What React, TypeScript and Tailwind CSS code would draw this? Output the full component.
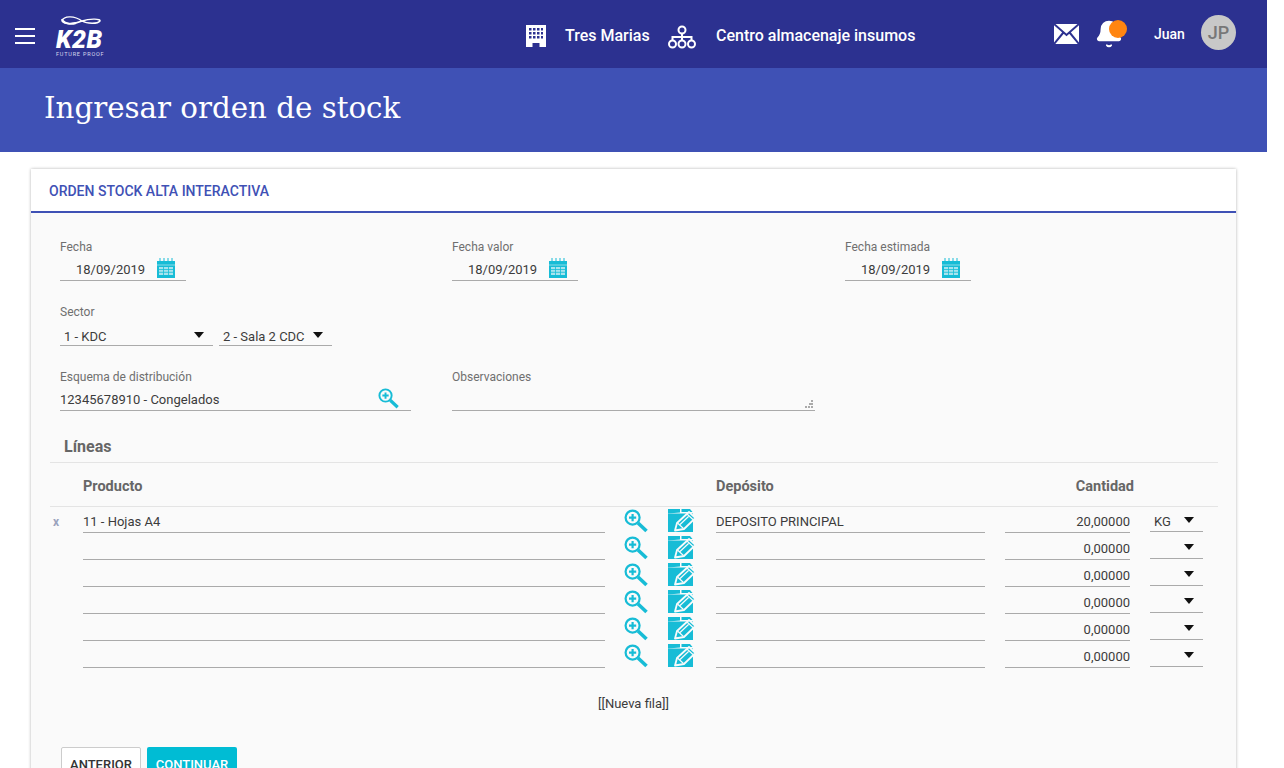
import { Bell } from "lucide-react";

const rows = [
  { product: "11 - Hojas A4", deposit: "DEPOSITO PRINCIPAL", qty: "20,00000", unit: "KG", remove: true },
  { product: "", deposit: "", qty: "0,00000", unit: "", remove: false },
  { product: "", deposit: "", qty: "0,00000", unit: "", remove: false },
  { product: "", deposit: "", qty: "0,00000", unit: "", remove: false },
  { product: "", deposit: "", qty: "0,00000", unit: "", remove: false },
  { product: "", deposit: "", qty: "0,00000", unit: "", remove: false },
];

function Arrow() {
  return (
    <svg width="10" height="6" viewBox="0 0 10 6" className="shrink-0">
      <polygon points="0,0 10,0 5,6" fill="#111" />
    </svg>
  );
}

function SearchIcon({ size = 24 }: { size?: number }) {
  return (
    <svg width={size} height={size} viewBox="0 0 24 24" fill="none" className="shrink-0">
      <circle cx="8.600" cy="8.600" r="7" stroke="#17bcd6" strokeWidth="2.200" />
      <path d="M5 8.600h7.200M8.600 5v7.200" stroke="#17bcd6" strokeWidth="2.200" />
      <path d="M14 14l8.500 8" stroke="#17bcd6" strokeWidth="3.600" />
    </svg>
  );
}

function EditIcon() {
  return (
    <svg width="29" height="24" viewBox="0 0 29 24" className="shrink-0">
      <path d="M1 0h12v3.500l-12 1zM14.500 0H23l2.500 3h-11z" fill="#17bcd6" />
      <rect x="1" y="4.500" width="25" height="18.500" fill="#17bcd6" />
      <path d="M8 21.500l2-7.500L22 3l6.500 6L17 20z" fill="#17bcd6" stroke="#fafafa" strokeWidth="1.800" strokeLinejoin="round" />
      <path d="M10.500 14l6 5.500M12.500 16l9-8.500M20 5l6.500 6" stroke="#fafafa" strokeWidth="1.200" />
    </svg>
  );
}

function CalendarIcon() {
  return (
    <svg width="18" height="20" viewBox="0 0 18 20" className="shrink-0">
      <path d="M3 0v4M7 0v4M11 0v4M15 0v4" stroke="#17bcd6" strokeWidth="1" />
      <rect x="0" y="3" width="18" height="17" fill="#17bcd6" />
      <rect x="2" y="9" width="14" height="8" fill="#a8e4ee" />
      <path d="M2 11.500h14M2 14.300h14M6.500 9v8M11.500 9v8" stroke="#17bcd6" strokeWidth="0.800" />
      <rect x="0" y="6.600" width="18" height="0.800" fill="#a8e4ee" />
    </svg>
  );
}

function DateField({ label }: { label: string }) {
  return (
    <div className="pl-[10px]">
      <div className="h-[14px] text-[12px] leading-[14px] text-[#6f6f6f]">{label}</div>
      <div className="mt-px flex h-[26px] w-[126px] items-center border-b border-[#aaa] pl-4 text-[13px] text-[#3c3c3c]">
        <span className="w-[81px] pt-[5px]">18/09/2019</span>
        <CalendarIcon />
      </div>
    </div>
  );
}

export default function App() {
  return (
    <div className="h-[768px] w-[1267px] overflow-hidden bg-white font-['Roboto',sans-serif]">
      <header className="flex h-[68px] items-center bg-[#2c3190] text-white">
        <div className="ml-[15px] flex w-[20px] flex-col gap-[5px] pt-[4px]">
          <span className="h-[2px] bg-white" />
          <span className="h-[2px] bg-white" />
          <span className="h-[2px] bg-white" />
        </div>
        <div className="relative ml-[21px] h-[54px] w-[50px]">
          <svg width="44" height="14" viewBox="0 0 44 14" fill="none" className="absolute left-[3px] top-[7px]">
            <path d="M3 7c2-6 13-5 20 0 5 3 16 3 18 0 1-2-9-3-18 0C16 10 5 11 3 7z" stroke="#fff" strokeWidth="1.400" />
            <path d="M3 5c1 4 8 6 14 4" stroke="#fff" strokeWidth="2" />
          </svg>
          <span className="absolute left-0 top-[22px] text-[25px] font-black italic leading-[21px] tracking-[0.500px]">K2B</span>
          <span className="absolute left-0 top-[44px] text-[5.500px] leading-[6px] tracking-[0.800px] text-[#d8d9ee] whitespace-nowrap">FUTURE PROOF</span>
        </div>
        <svg width="20" height="22" viewBox="0 0 20 22" className="ml-[420px] mt-[4px]">
          <path fillRule="evenodd" d="M0 0h20v22h-6.500v-4h-7v4H0zM3 3v2.500h2.500V3zM7 3v2.500h2.500V3zM11 3v2.500h2.500V3zM15 3v2.500h2V3zM3 7v2.500h2.500V7zM7 7v2.500h2.500V7zM11 7v2.500h2.500V7zM15 7v2.500h2V7zM3 11v2.500h2.500V11zM7 11v2.500h2.500V11zM11 11v2.500h2.500V11zM15 11v2.500h2V11z" fill="#fff" />
        </svg>
        <span className="ml-[19px] mt-[4px] w-[84px] text-[16px] font-medium whitespace-nowrap">Tres Marias</span>
        <svg width="28" height="24" viewBox="0 0 28 24" fill="none" stroke="#fff" strokeWidth="2" className="ml-[19px] mt-[6px]">
          <circle cx="14" cy="5" r="3.500" />
          <circle cx="4.500" cy="19" r="3.500" />
          <circle cx="14" cy="19" r="3.500" />
          <circle cx="23.500" cy="19" r="3.500" />
          <path d="M14 8.500v7M4.500 15.500V12h19v3.500" />
        </svg>
        <span className="ml-[20px] mt-[4px] w-[200px] text-[16px] font-medium whitespace-nowrap">Centro almacenaje insumos</span>
        <svg width="25" height="20" viewBox="0 0 25 20" className="ml-[138px]">
          <rect width="25" height="20" fill="#fff" />
          <path d="M0 0l12.500 11L25 0M0 20l9-11M25 20l-9-11" fill="none" stroke="#2c3190" strokeWidth="2" />
        </svg>
        <div className="relative ml-[18px] h-[30px] w-[30px]">
          <Bell size={30} fill="#fff" stroke="#fff" strokeWidth={1.400} className="absolute left-[-3px] top-0" />
          <span className="absolute left-[12px] top-px h-[18px] w-[18px] rounded-full bg-[#ff8511]" />
        </div>
        <span className="ml-[27px] w-[31px] text-[14px] font-medium">Juan</span>
        <div className="ml-[16px] mt-[-4px] flex h-[35px] w-[35px] items-center justify-center rounded-full bg-[#c8c8c8] text-[18px] font-medium text-[#777]">JP</div>
      </header>

      <div className="flex h-[84px] items-center bg-[#3f51b5] pl-[44px] pb-[3px]">
        <h1 className="font-['DejaVu_Serif',serif] text-[29.300px] font-normal text-white">Ingresar orden de stock</h1>
      </div>

      <main className="ml-[31px] mt-[17px] w-[1205px] bg-[#fafafa] shadow-[0_0_3px_rgba(0,0,0,0.3)]">
        <div className="flex h-[44px] items-center border-b-2 border-[#3f51b5] bg-white pl-[18px] pt-[2px]">
          <span className="text-[14px] font-medium text-[#3f51b5]">ORDEN STOCK ALTA INTERACTIVA</span>
        </div>

        <div className="pl-[19px] pr-[18px] pt-[27px]">
          <div className="grid grid-cols-[392px_393px_1fr]">
            <DateField label="Fecha" />
            <DateField label="Fecha valor" />
            <DateField label="Fecha estimada" />
          </div>

          <div className="mt-[24px] pl-[10px]">
            <div className="h-[14px] text-[12px] leading-[14px] text-[#6f6f6f]">Sector</div>
            <div className="flex h-[27px] gap-[6px] text-[13px] text-[#3c3c3c]">
              <div className="flex w-[153px] items-center justify-between border-b border-[#aaa] pl-1 pr-[9px] pt-[9px]">
                <span>1 - KDC</span>
                <span className="mb-[3px]"><Arrow /></span>
              </div>
              <div className="flex w-[113px] items-center justify-between border-b border-[#aaa] pl-1 pr-[9px] pt-[9px]">
                <span>2 - Sala 2 CDC</span>
                <span className="mb-[3px]"><Arrow /></span>
              </div>
            </div>
          </div>

          <div className="mt-[24px] flex pl-[10px]">
            <div className="w-[351px]">
              <div className="h-[14px] text-[12px] leading-[14px] text-[#6f6f6f]">Esquema de distribución</div>
              <div className="flex h-[27px] items-center justify-between border-b border-[#aaa] pr-[12px] text-[13px] text-[#3c3c3c]">
                <span className="pt-[5px]">12345678910 - Congelados</span>
                <span className="mt-[2px]"><SearchIcon size={21} /></span>
              </div>
            </div>
            <div className="ml-[41px] w-[363px]">
              <div className="h-[14px] text-[12px] leading-[14px] text-[#6f6f6f]">Observaciones</div>
              <div className="flex h-[27px] items-end justify-end border-b border-[#aaa] pb-[2px] pr-[2px]">
                <svg width="8" height="8" viewBox="0 0 8 8">
                  <path d="M6 0h2v2H6zM4 3h2v2H4zM6 3h2v2H6zM0 6h2v2H0zM3 6h2v2H3zM6 6h2v2H6z" fill="#aaa" />
                </svg>
              </div>
            </div>
          </div>

          <div className="h-[52px] border-b border-[#e4e4e4] pl-[14px] pt-[25px] text-[16px] font-bold leading-[22px] text-[#666]">Líneas</div>

          <div className="flex h-[44px] items-center border-b border-[#e4e4e4] pt-[4px] text-[14.500px] font-bold text-[#666]">
            <span className="ml-[33px] w-[633px]">Producto</span>
            <span className="w-[289px]">Depósito</span>
            <span className="w-[129px] text-right">Cantidad</span>
          </div>

          {rows.map((row, i) => (
            <div key={i} className="flex h-[27px] text-[13px] text-[#3c3c3c]">
              <div className="flex w-[33px] items-center pl-[3px] pt-[3px] text-[12px] font-bold text-[#9aa3bd]">{row.remove ? "x" : ""}</div>
              <div className="mb-px flex w-[522px] items-center border-b border-[#aaa] pt-[5px]">{row.product}</div>
              <div className="ml-[19px] w-[24px] pt-[2px]"><SearchIcon /></div>
              <div className="ml-[19px] w-[29px] pt-[2px]"><EditIcon /></div>
              <div className="mb-px ml-[20px] flex w-[269px] items-center border-b border-[#aaa] pt-[5px]">{row.deposit}</div>
              <div className="mb-px ml-[20px] flex w-[125px] items-center justify-end border-b border-[#aaa] pt-[5px]">{row.qty}</div>
              <div className="mb-[2px] ml-[20px] flex w-[53px] items-center justify-between border-b border-[#aaa] pl-1 pr-[9px] pt-[5px]">
                <span>{row.unit}</span>
                <span className="mb-[4px]"><Arrow /></span>
              </div>
            </div>
          ))}

          <div className="mt-[27px] pl-[548px] text-[13px] leading-[16px] text-[#3c3c3c]">[[Nueva fila]]</div>

          <div className="mt-[35px] flex gap-[6px] pl-[11px] pb-[20px]">
            <button className="h-[32px] w-[80px] rounded-[2px] border border-[#ccc] bg-white pt-[3px] text-[13px] font-medium text-[#333]">ANTERIOR</button>
            <button className="h-[32px] w-[90px] rounded-[2px] bg-[#00bcd4] pt-[3px] text-[13px] font-medium text-white">CONTINUAR</button>
          </div>
        </div>
      </main>
    </div>
  );
}
